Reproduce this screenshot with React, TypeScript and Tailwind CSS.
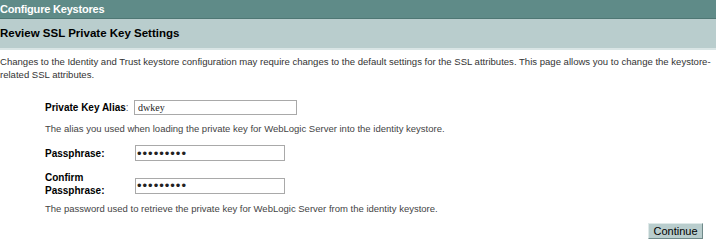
import React from 'react'

const font = { fontFamily: '"Liberation Sans", Arial, sans-serif' }

const PasswordInput: React.FC = () => (
  <input
    type="password"
    defaultValue="123456789"
    readOnly
    className="w-[150px] h-[16px] border border-[#a9a9a9] bg-white px-[1px] text-[13px] tracking-[1px] leading-none outline-none"
  />
)

export default function App() {
  return (
    <div className="w-[716px] h-[248px] bg-white overflow-hidden text-[#222]" style={font}>
      <div className="h-[19px] bg-[#5f8b88] border-b border-[#4f7774] flex items-center">
        <span className="text-white font-bold text-[11px] tracking-[-0.2px] leading-none">Configure Keystores</span>
      </div>
      <div className="h-[31px] bg-[#b9cdcd] border-b-2 border-[#d9e5e5] flex items-center">
        <span className="text-black font-bold text-[11.5px] leading-none">Review SSL Private Key Settings</span>
      </div>

      <p className="mt-[5px] text-[9.55px] leading-[13px] text-[#333]">
        <span className="block whitespace-nowrap">
          Changes to the Identity and Trust keystore configuration may require changes to the default settings for the
          SSL attributes. This page allows you to change the keystore-
        </span>
        <span className="block">related SSL attributes.</span>
      </p>

      <div className="pl-[45px]">
        <div className="mt-[18px] flex items-center h-[16px]">
          <span className="w-[89px] text-[10px] font-bold text-black">
            Private Key Alias<span className="font-normal text-[#666]">:</span>
          </span>
          <input
            type="text"
            defaultValue="dwkey"
            readOnly
            className="w-[163px] h-[15px] border border-[#a9a9a9] bg-white px-[3px] text-[10px] leading-none outline-none"
            style={{ fontFamily: '"Liberation Serif", "Times New Roman", serif' }}
          />
        </div>
        <div className="mt-[7px] text-[9.5px] text-[#444] leading-[13px]">
          The alias you used when loading the private key for WebLogic Server into the identity keystore.
        </div>

        <div className="mt-[10px] flex items-center h-[16px]">
          <span className="w-[90px] text-[10px] font-bold text-black">Passphrase:</span>
          <PasswordInput />
        </div>
        <div className="mt-[10px] flex items-start">
          <span className="w-[90px] text-[10px] font-bold text-black leading-[13px]">
            Confirm
            <br />
            Passphrase:
          </span>
          <div className="mt-[2px]">
            <PasswordInput />
          </div>
        </div>
        <div className="mt-[5px] text-[9.5px] text-[#444] leading-[13px]">
          The password used to retrieve the private key for WebLogic Server from the identity keystore.
        </div>
      </div>

      <div className="flex justify-end pr-[13px] mt-[8px]">
        <button className="w-[55px] h-[16px] bg-[#b9cdcd] border border-[#dfe9e9] border-r-[#6f8a8a] border-b-[#6f8a8a] text-[11px] leading-none text-black">
          Continue
        </button>
      </div>
    </div>
  )
}
